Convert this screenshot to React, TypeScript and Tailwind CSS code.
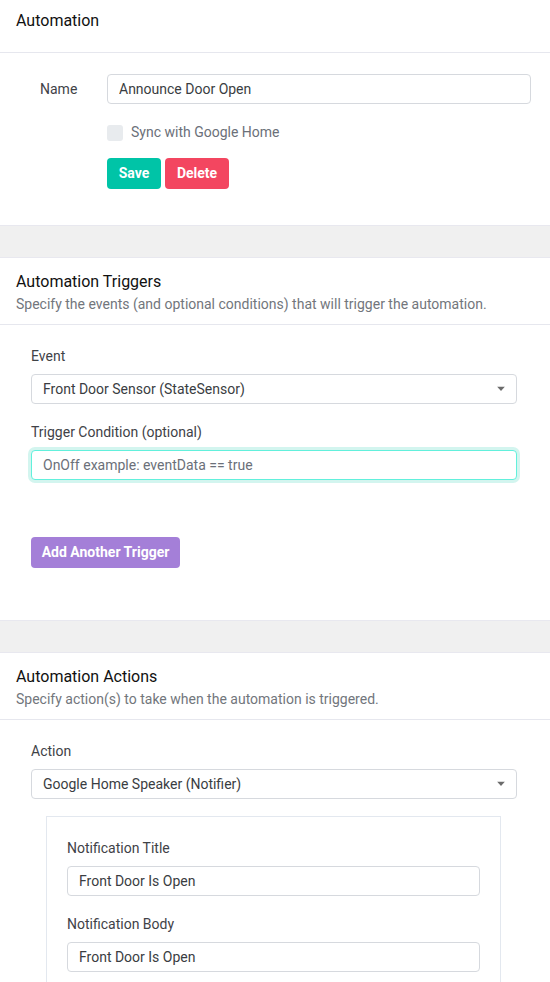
import React from "react";

const font = { fontFamily: "Roboto, 'Liberation Sans', sans-serif" };

function Caret() {
  return (
    <svg width="8" height="5" viewBox="0 0 8 5" className="absolute right-[11px] top-1/2 -translate-y-1/2">
      <path d="M0 0 L8 0 L4 4.5 Z" fill="#6b6b6b" />
    </svg>
  );
}

function SelectBox({ value }: { value: string }) {
  return (
    <div className="relative h-[30px] w-full rounded-[4px] border border-[#d6d9de] bg-white px-[11px] flex items-center text-[14px] text-[#3a3d42]">
      {value}
      <Caret />
    </div>
  );
}

function TextInput({ value, focus, placeholder }: { value?: string; focus?: boolean; placeholder?: string }) {
  return (
    <input
      readOnly
      value={value ?? ""}
      placeholder={placeholder}
      className={
        "block h-[30px] w-full rounded-[4px] bg-white px-[11px] text-[14px] text-[#3a3d42] placeholder:text-[#6b7079] outline-none " +
        (focus
          ? "border border-[#62f0dc] shadow-[0_0_0_3px_#d3f5ef]"
          : "border border-[#d6d9de]")
      }
      style={font}
    />
  );
}

function SectionHeader({ title, desc }: { title: string; desc: string }) {
  return (
    <div className="border-b border-[#e6e7ee] px-4 pt-[12px] pb-[10px]">
      <div className="text-[16px] leading-[24px] text-[#111]">{title}</div>
      <div className="text-[14px] leading-[20px] text-[#72767c]">{desc}</div>
    </div>
  );
}

function Band() {
  return <div className="h-[33px] bg-[#f0f0f0] border-y border-[#e8e8ef]" />;
}

export default function App() {
  return (
    <div className="w-[550px] min-h-[982px] bg-white overflow-hidden" style={font}>
      {/* Section 1 */}
      <div className="border-b border-[#e6e7ee] px-4 pt-[9px] h-[53px]">
        <div className="text-[16px] leading-[24px] text-[#111]">Automation</div>
      </div>
      <div className="pt-[21px] pb-[36px] pr-[19px]">
        <div className="flex items-center">
          <div className="w-[107px] pl-[40px] text-[14px] text-[#3f4247]">Name</div>
          <div className="flex-1">
            <TextInput value="Announce Door Open" />
          </div>
        </div>
        <div className="ml-[107px] mt-[20px] flex items-center h-[17px]">
          <div className="h-[16px] w-[16px] rounded-[3px] bg-[#e8ebee]" />
          <span className="ml-[8px] text-[14px] text-[#6b7079]">Sync with Google Home</span>
        </div>
        <div className="ml-[107px] mt-[17px] flex gap-[4px]">
          <button className="h-[31px] w-[54px] rounded-[4px] bg-[#00c4a7] text-white text-[14px] font-bold">Save</button>
          <button className="h-[31px] w-[64px] rounded-[4px] bg-[#f34660] text-white text-[14px] font-bold">Delete</button>
        </div>
      </div>

      <Band />

      {/* Section 2 */}
      <SectionHeader
        title="Automation Triggers"
        desc="Specify the events (and optional conditions) that will trigger the automation."
      />
      <div className="pl-[31px] pr-[33px] pt-[21px] pb-[52px]">
        <div className="text-[14px] leading-[20px] text-[#3f4247]">Event</div>
        <div className="mt-[8px]">
          <SelectBox value="Front Door Sensor (StateSensor)" />
        </div>
        <div className="mt-[18px] text-[14px] leading-[20px] text-[#3f4247]">Trigger Condition (optional)</div>
        <div className="mt-[8px]">
          <TextInput focus placeholder="OnOff example: eventData == true" />
        </div>
        <button className="mt-[57px] h-[31px] w-[149px] rounded-[4px] bg-[#a47fd8] text-white text-[14px] font-bold">
          Add Another Trigger
        </button>
      </div>

      <Band />

      {/* Section 3 */}
      <SectionHeader
        title="Automation Actions"
        desc="Specify action(s) to take when the automation is triggered."
      />
      <div className="pl-[31px] pr-[33px] pt-[21px]">
        <div className="text-[14px] leading-[20px] text-[#3f4247]">Action</div>
        <div className="mt-[8px]">
          <SelectBox value="Google Home Speaker (Notifier)" />
        </div>
        <div className="mt-[17px] ml-[15px] mr-[16px] border border-[#e3e8ef] px-[20px] pt-[21px] pb-[20px]">
          <div className="text-[14px] leading-[20px] text-[#3f4247]">Notification Title</div>
          <div className="mt-[8px]">
            <TextInput value="Front Door Is Open" />
          </div>
          <div className="mt-[18px] text-[14px] leading-[20px] text-[#3f4247]">Notification Body</div>
          <div className="mt-[8px]">
            <TextInput value="Front Door Is Open" />
          </div>
        </div>
      </div>
    </div>
  );
}
